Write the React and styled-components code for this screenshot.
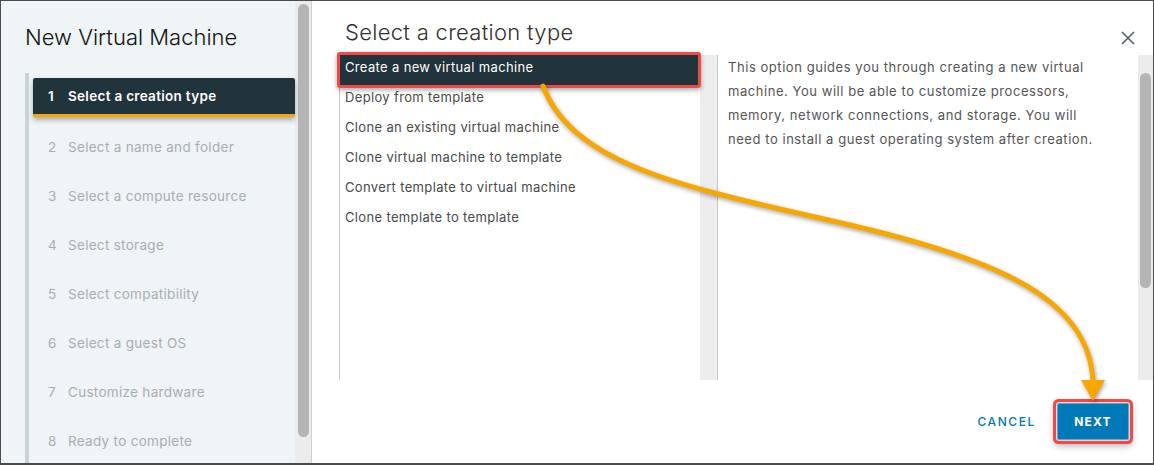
import React from "react";
import styled, { createGlobalStyle } from "styled-components";

const GlobalStyle = createGlobalStyle`
  body {
    margin: 0;
    font-family: Inter, "Noto Sans", sans-serif;
    background: #fff;
  }
`;

const steps = [
  "Select a creation type",
  "Select a name and folder",
  "Select a compute resource",
  "Select storage",
  "Select compatibility",
  "Select a guest OS",
  "Customize hardware",
  "Ready to complete",
];

const types = [
  "Create a new virtual machine",
  "Deploy from template",
  "Clone an existing virtual machine",
  "Clone virtual machine to template",
  "Convert template to virtual machine",
  "Clone template to template",
];

export default function App() {
  const current = 0;
  const selected = 0;

  return (
    <>
      <GlobalStyle />
      <Frame>
        <Sidebar>
          <SideTitle>New Virtual Machine</SideTitle>
          <Steps>
            {steps.map((s, i) => (
              <Step key={s} active={i === current}>
                <StepNum>{i + 1}</StepNum>
                {s}
              </Step>
            ))}
          </Steps>
        </Sidebar>
        <Track>
          <Thumb height={433} />
        </Track>

        <Main>
          <Header>
            <Title>Select a creation type</Title>
            <Close aria-label="close">
              <svg width="14" height="14" viewBox="0 0 14 14">
                <path d="M1 1 L13 13 M13 1 L1 13" stroke="#4d5f68" strokeWidth="1.6" />
              </svg>
            </Close>
          </Header>

          <Body>
            <List>
              {types.map((t, i) => (
                <Row key={t} selected={i === selected}>
                  {t}
                </Row>
              ))}
            </List>
            <ListTrack />
            <Desc>
              <DescText>
                This option guides you through creating a new virtual
                <br />
                machine. You will be able to customize processors,
                <br />
                memory, network connections, and storage. You will
                <br />
                need to install a guest operating system after creation.
              </DescText>
              <DescTrack>
                <Thumb height={215} />
              </DescTrack>
            </Desc>
          </Body>

          <Footer>
            <LinkButton>CANCEL</LinkButton>
            <PrimaryButton>NEXT</PrimaryButton>
          </Footer>
        </Main>

        {/* annotation arrow */}
        <Overlay width="1154" height="465" viewBox="0 0 1154 465">
          <path
            d="M543 86 C 575 170, 700 190, 850 225 C 1000 260, 1090 300, 1093 382"
            fill="none"
            stroke="#f7a700"
            strokeWidth="5"
            strokeLinecap="round"
          />
          <polygon points="1081,380 1105,380 1093,401" fill="#f7a700" />
        </Overlay>
      </Frame>
    </>
  );
}

const Frame = styled.div`
  position: relative;
  width: 1154px;
  height: 465px;
  box-sizing: border-box;
  border: 1px solid #4b4b4b;
  border-bottom-width: 2px;
  display: flex;
  background: #fff;
  overflow: hidden;
`;

const Sidebar = styled.aside`
  width: 294px;
  background: #eff4f7;
  display: flex;
  flex-direction: column;
`;

const SideTitle = styled.div`
  padding: 23px 0 0 24px;
  font-size: 22px;
  line-height: 26px;
  font-weight: 300;
  color: #111;
`;

const Steps = styled.div`
  flex: 1;
  margin: 23px 0 0 24px;
  border-left: 4px solid #c8d3da;
  display: flex;
  flex-direction: column;
`;

const Step = styled.div`
  position: relative;
  height: ${(p) => (p.active ? "36px" : "39px")};
  margin: 5px 0 5px 4px;
  padding-left: 15px;
  display: flex;
  align-items: center;
  font-size: 13.5px;
  letter-spacing: 0.3px;
  color: ${(p) => (p.active ? "#fff" : "#a9aeb1")};
  font-weight: ${(p) => (p.active ? 600 : 400)};
  background: ${(p) => (p.active ? "#21333b" : "transparent")};
  border-bottom: ${(p) => (p.active ? "3px solid #f8a800" : "none")};
  border-radius: 2px;
  box-shadow: ${(p) => (p.active ? "0 3px 5px rgba(0, 0, 0, 0.3)" : "none")};
`;

const StepNum = styled.span`
  width: 20px;
`;

const Track = styled.div`
  width: 17px;
  background: #ececec;
  padding: 3px 3px 0;
  box-sizing: border-box;
  border-right: 1px solid #c7d3db;
`;

const Thumb = styled.div`
  width: 11px;
  height: ${(p) => p.height}px;
  border-radius: 6px;
  background: #b5b5b5;
`;

const Main = styled.main`
  flex: 1;
  display: flex;
  flex-direction: column;
`;

const Header = styled.div`
  height: 54px;
  display: flex;
  justify-content: space-between;
  align-items: flex-start;
  padding: 18px 18px 0 33px;
  box-sizing: border-box;
`;

const Title = styled.h1`
  margin: 0;
  font-size: 22px;
  line-height: 26px;
  font-weight: 300;
  letter-spacing: 0.3px;
  color: #313131;
`;

const Close = styled.button`
  margin-top: 12px;
  padding: 0;
  border: none;
  background: none;
  display: flex;
`;

const Body = styled.div`
  height: 325px;
  display: flex;
  padding-left: 27px;
`;

const List = styled.div`
  width: 360px;
  border-left: 1px solid #c6c6c6;
  display: flex;
  flex-direction: column;
`;

const Row = styled.div`
  position: relative;
  height: 30px;
  padding-left: 5px;
  line-height: 24px;
  font-size: 13px;
  letter-spacing: 0.35px;
  color: ${(p) => (p.selected ? "#fff" : "#4a4a4a")};
  background: ${(p) => (p.selected ? "#21333b" : "transparent")};

  ${(p) =>
    p.selected &&
    `
    &::after {
      content: "";
      position: absolute;
      top: -3px;
      bottom: -3px;
      left: -3px;
      right: -1px;
      border: 3px solid #f24848;
      border-radius: 3px;
      box-shadow: 0 2px 5px rgba(0, 0, 0, 0.35);
    }
  `}
`;

const ListTrack = styled.div`
  width: 17px;
  background: #ededed;
  border-right: 1px solid #c6c6c6;
`;

const Desc = styled.div`
  flex: 1;
  display: flex;
`;

const DescText = styled.p`
  flex: 1;
  margin: 0;
  padding-left: 10px;
  font-size: 13px;
  line-height: 24px;
  letter-spacing: 0.55px;
  color: #555;
`;

const DescTrack = styled.div`
  width: 15px;
  background: #ececec;
  padding: 18px 0 0 2px;
  box-sizing: border-box;
`;

const Footer = styled.div`
  flex: 1;
  display: flex;
  justify-content: flex-end;
  align-items: center;
  gap: 21px;
  padding-right: 24px;
`;

const LinkButton = styled.button`
  border: none;
  background: none;
  padding: 0;
  font-family: inherit;
  font-size: 12px;
  font-weight: 500;
  letter-spacing: 1.6px;
  color: #0079b8;
`;

const PrimaryButton = styled.button`
  width: 72px;
  height: 37px;
  border: 1px solid #6aa4c6;
  border-radius: 2px;
  background: #0079b8;
  color: #fff;
  font-family: inherit;
  font-size: 12px;
  font-weight: 700;
  letter-spacing: 1.2px;
  box-shadow: 0 0 0 1px #d9d9d9, 0 0 0 4px #f24848, 0 3px 7px 3px rgba(0, 0, 0, 0.3);
`;

const Overlay = styled.svg`
  position: absolute;
  top: -1px;
  left: -1px;
  pointer-events: none;
  filter: drop-shadow(1px 2px 2px rgba(0, 0, 0, 0.35));
`;
